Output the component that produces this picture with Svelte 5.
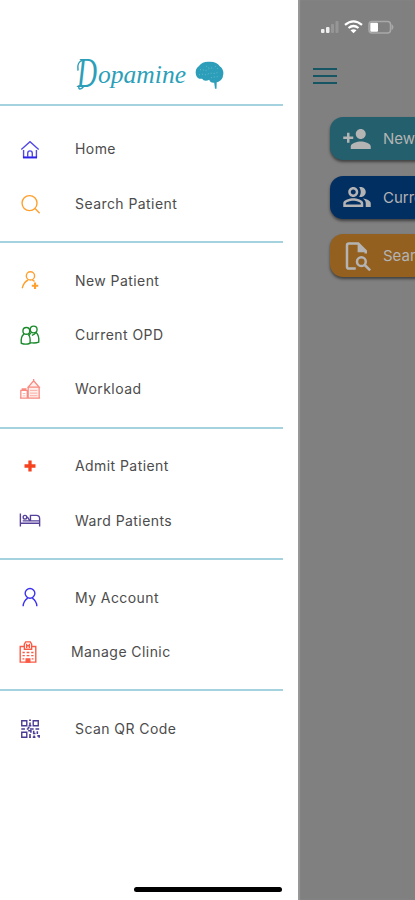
<script>
  const sections = [
    [
      { icon: 'home', label: 'Home', color: '#5148e5' },
      { icon: 'search', label: 'Search Patient', color: '#ff9f2e' }
    ],
    [
      { icon: 'add', label: 'New Patient', color: '#ff9f2e' },
      { icon: 'group', label: 'Current OPD', color: '#198a2b' },
      { icon: 'workload', label: 'Workload', color: '#fa8a80' }
    ],
    [
      { icon: 'cross', label: 'Admit Patient', color: '#f5431f' },
      { icon: 'bed', label: 'Ward Patients', color: '#56409a' }
    ],
    [
      { icon: 'user', label: 'My Account', color: '#3a30ee' },
      { icon: 'clinic', label: 'Manage Clinic', color: '#fb5a45', shifted: true }
    ],
    [{ icon: 'qr', label: 'Scan QR Code', color: '#4a3a94' }]
  ];

  const tiles = [
    { icon: 'add', label: 'New Patient', bg: '#235f6c' },
    { icon: 'group', label: 'Current OPD', bg: '#022f62' },
    { icon: 'find', label: 'Search Patient', bg: '#93601f' }
  ];
</script>

<div class="screen">
  <aside>
    <header>
      <svg class="logo" width="160" height="46" viewBox="70 50 160 46">
        <g fill="#2b9fb9" font-family="'Liberation Serif', serif" font-style="italic">
          <text y="87"><tspan x="77" font-size="43" textLength="20" lengthAdjust="spacingAndGlyphs">D</tspan><tspan x="98" y="83" font-size="26" textLength="88" lengthAdjust="spacingAndGlyphs">opamine</tspan></text>
        </g>
        <path fill="none" stroke="#2b9fb9" stroke-width="1.500" stroke-linecap="round" d="M83 60c-4 1-6 5-5 10M84 86c-3 4-6 4-5 0" />
        <path fill="#2c9eb9" d="M196 75c-1-4 0-7 3-9 2-3 6-4.500 10-4.200 5-.3 9 1.500 11 4.700 3 2 4 6 3 9 0 3-2 5-5 6.500l-1.300.3-.2 6.500h-1.500l-.8-6c-3 .3-4-1-5-3-3 1.500-6 1-7-1-3 .4-5.200-.8-6.200-3.800z" />
        <path fill="none" stroke="#7cc5d3" stroke-width=".7" stroke-dasharray="1 2" d="M200 70c3-2 4 2 7 0s4-3 7-1M199 75c4-2 6 1 9-1s6 1 10-2M206 66l3 2M211 78c2-2 5 0 8-2M215 66l4 4" />
      </svg>
    </header>
    <nav>
      {#each sections as items}
        <section>
          {#each items as item}
            <div class="row" class:shifted={item.shifted}>
              <svg class="icon" viewBox="0 0 24 24" style:color={item.color}>
                {#if item.icon === 'home'}
                  <path d="M2.500 12.500L12 4l9.500 8.500M5 13v8M19 13v8M9.500 20.500v-4a2.500 2.500 0 0 1 5 0v4" />
                  <path d="M4.300 21.200h15.400" stroke-width="2.200" stroke="#2d22e8" />
                {:else if item.icon === 'search'}
                  <circle cx="11.500" cy="11" r="8.200" /><path d="M17.500 17l5 5" />
                {:else if item.icon === 'add'}
                  <circle cx="12.500" cy="7.500" r="4.500" /><path d="M10 12C6.500 13.500 4.500 17 3.500 21M14.500 12l2.500 1.500" />
                  <path d="M17.500 14.800v7M14 18.300h7" stroke-width="2.300" />
                {:else if item.icon === 'group'}
                  <circle cx="8" cy="7.500" r="3.700" /><circle cx="16" cy="6" r="3.700" />
                  <path d="M5.500 11C2.500 13 2 17 2.500 21q5 2 9.500 0c.5-4 0-8-2-9.500M13 9.500l-2 2.500M18.500 9c3 3 3.500 7 3 10.800q-4 1.500-9 .5M14 12.500q3-1 4.500-3" />
                {:else if item.icon === 'workload'}
                  <path d="M1 22h22M2 22v-8.500h7V22M3.500 13.500v-1.500h4v1.500M10 22V10h12v12M10 10l6-7 6 7zM16 1v3" stroke-width="1.400" />
                  <path d="M12 13.500h8M12 16.500h8M12 19.300h8M4 17h3M4 19.500h3" stroke-width="1" opacity=".7" />
                  <path d="M10 10l6-7 6 7v12H10z" fill="currentColor" fill-opacity=".15" stroke="none" />
                {:else if item.icon === 'cross'}
                  <path d="M10.200 6h3.600v4.200h4.200v3.600h-4.200V18h-3.600v-4.200H6v-3.600h4.200z" fill="currentColor" stroke="none" />
                {:else if item.icon === 'bed'}
                  <path d="M1.500 5v14M1.500 15.500h21M22.500 19V10.500Q22.500 7 19 7h-6.500v6M4 13h18" />
                  <circle cx="6.500" cy="9" r="2" /><path d="M9 8.500l3 4.500" />
                {:else if item.icon === 'user'}
                  <circle cx="12" cy="8" r="5.300" /><path d="M4.500 22c.2-5 2.500-7 5-8.800M19.500 22c-.2-5-2.500-7-5-8.800" />
                {:else if item.icon === 'clinic'}
                  <path d="M3.500 23V6H8V3.500L9.500 1h5L16 3.500V6h4.500v17zM8 6v3h8V6M10.500 3v4.500M13.500 3v4.500M10.500 5.200h3" />
                  <path d="M6 12.500h2.500M10.500 12.500h3M15.500 12.500H18M6 16h2.500M10.500 16h3M15.500 16H18M6 19.500h2M16 19.500h2" />
                  <path d="M10 19.500h4V23h-4z" fill="currentColor" />
                {:else}
                  <path d="M3 3h5.500v5.500H3zM15.500 3H21v5.500h-5.500zM3 15.500h5.500V21H3z" />
                  <path d="M11 2.500h2M12 5v4M10.500 8.500h3M2.500 12h4M8.500 12h2M12 12h4M18 12h4M10 14h3v2M16 14v3h2M20 14.500v3M12 17.500v4M9.500 10.500h2M15 21h3M16.500 19v2M20 19.500h2v2M11 21h2" stroke-width="1.700" />
                {/if}
              </svg>
              <span>{item.label}</span>
            </div>
          {/each}
        </section>
      {/each}
    </nav>
    <div class="home-bar"></div>
  </aside>

  <main>
    <svg class="status" width="78" height="16" viewBox="0 0 78 16">
      <g fill="#eee">
        <rect x="2" y="9" width="3.500" height="4" rx="1" /><rect x="7" y="7" width="3.500" height="6" rx="1" />
        <rect x="12" y="4" width="3" height="9" rx="1" opacity=".2" /><rect x="16.500" y="1" width="3" height="12" rx="1" opacity=".2" />
      </g>
      <g fill="none" stroke="#fff" stroke-width="2.200">
        <path d="M26 4.800q8.500-7 17 0M29.500 8q5-4 10 0" />
      </g>
      <path d="M31.500 10.200q3-2 6 0l-3 3z" fill="#fff" />
      <rect x="50" y="1.500" width="21.500" height="11.500" rx="3" fill="none" stroke="#a8a8a8" stroke-width="1.500" />
      <path d="M72.500 4q4 3.200 0 6.400z" fill="#a8a8a8" />
      <rect x="51.300" y="2.800" width="7.700" height="9" rx="1" fill="#fff" />
    </svg>
    <div class="menu"><i></i><i></i><i></i></div>
    <div class="tiles">
      {#each tiles as tile}
        <div class="tile" style:background={tile.bg}>
          <svg viewBox="0 0 24 24">
            {#if tile.icon === 'add'}
              <path d="M15 12c2.210 0 4-1.790 4-4s-1.790-4-4-4-4 1.790-4 4 1.790 4 4 4zm-9-2V7H4v3H1v2h3v3h2v-3h3v-2H6zm9 4c-2.670 0-8 1.340-8 4v2h16v-2c0-2.660-5.330-4-8-4z" />
            {:else if tile.icon === 'group'}
              <path fill-rule="evenodd" d="M16.670 13.130C18.040 14.060 19 15.320 19 17v3h4v-3c0-2.180-3.570-3.470-6.330-3.870zM15 12c2.210 0 4-1.790 4-4s-1.790-4-4-4c-.47 0-.91.1-1.330.24C14.500 5.270 15 6.580 15 8s-.5 2.730-1.330 3.760c.42.14.86.24 1.330.24zM9 12c2.210 0 4-1.790 4-4s-1.790-4-4-4-4 1.790-4 4 1.790 4 4 4zm0-6c1.100 0 2 .9 2 2s-.9 2-2 2-2-.9-2-2 .9-2 2-2zM9 13c-2.670 0-8 1.340-8 4v3h16v-3c0-2.660-5.330-4-8-4zm6 5H3v-.990C3.200 16.290 6.300 15 9 15s5.800 1.290 6 2v1z" />
            {:else}
              <path d="M11 22H5.500Q4 22 4 20.500v-17Q4 2 5.500 2H13l6 6v2" fill="none" stroke="#b4b4b4" stroke-width="2" />
              <path d="M12.500 2v7H20z" />
              <circle cx="15.500" cy="16.500" r="3.500" fill="none" stroke="#b4b4b4" stroke-width="2" />
              <path d="M18 19l4.500 4.500" stroke="#b4b4b4" stroke-width="2" />
            {/if}
          </svg>
          <span>{tile.label}</span>
        </div>
      {/each}
    </div>
  </main>
</div>

<style>
  :global(body) { background: #fff; }
  .screen {
    display: flex;
    width: 415px;
    height: 900px;
    overflow: hidden;
    font-family: Inter, 'Liberation Sans', sans-serif;
  }
  aside {
    display: flex;
    flex-direction: column;
    box-sizing: border-box;
    width: 298px;
    flex: none;
    background: #fff;
    padding-right: 15px;
  }
  header {
    box-sizing: border-box;
    height: 106px;
    padding: 50px 0 0 70px;
    border-bottom: 2px solid #a4d2df;
  }
  .logo { display: block; }
  nav { flex: 1; }
  section {
    padding: 10.300px 0 10.300px;
    border-bottom: 2px solid #a4d2df;
  }
  section:first-child { padding-top: 16px; padding-bottom: 10px; }
  section:last-child { border-bottom: 0; }
  .row {
    display: flex;
    align-items: center;
    height: 54.400px;
    padding-left: 19px;
    gap: 34px;
    color: #4c4c4c;
    font-size: 14px;
    letter-spacing: 0.430px;
    white-space: nowrap;
  }
  .row span { padding-bottom: 0.500px; }
  .row.shifted { padding-left: 17px; gap: 32px; }
  .icon {
    width: 22px;
    height: 22px;
    flex: none;
    fill: none;
    stroke: currentColor;
    stroke-width: 1.500;
  }
  .home-bar {
    align-self: flex-end;
    width: 148px;
    height: 5px;
    margin: 0 1px 8px 0;
    border-radius: 3px;
    background: #000;
  }
  main {
    display: flex;
    flex-direction: column;
    flex: 1;
    min-width: 0;
    background: #808080;
    box-shadow: inset 2px 0 1px #989898;
  }
  .status { margin: 20px 0 0 21px; }
  .menu {
    display: flex;
    flex-direction: column;
    gap: 5px;
    margin: 32px 0 0 15px;
  }
  .menu i { width: 24px; height: 2px; background: #165664; }
  .tiles {
    display: flex;
    flex-direction: column;
    gap: 15.500px;
    margin: 33px 0 0 32px;
  }
  .tile {
    display: flex;
    align-items: center;
    gap: 11px;
    box-sizing: border-box;
    width: 150px;
    height: 43px;
    padding-left: 12px;
    border-radius: 13px;
    box-shadow: 0 2px 3px rgba(0, 0, 0, .5);
    color: #b4b4b4;
    font-size: 15px;
    white-space: nowrap;
  }
  .tile svg { width: 30px; height: 30px; flex: none; fill: #b4b4b4; }
</style>
